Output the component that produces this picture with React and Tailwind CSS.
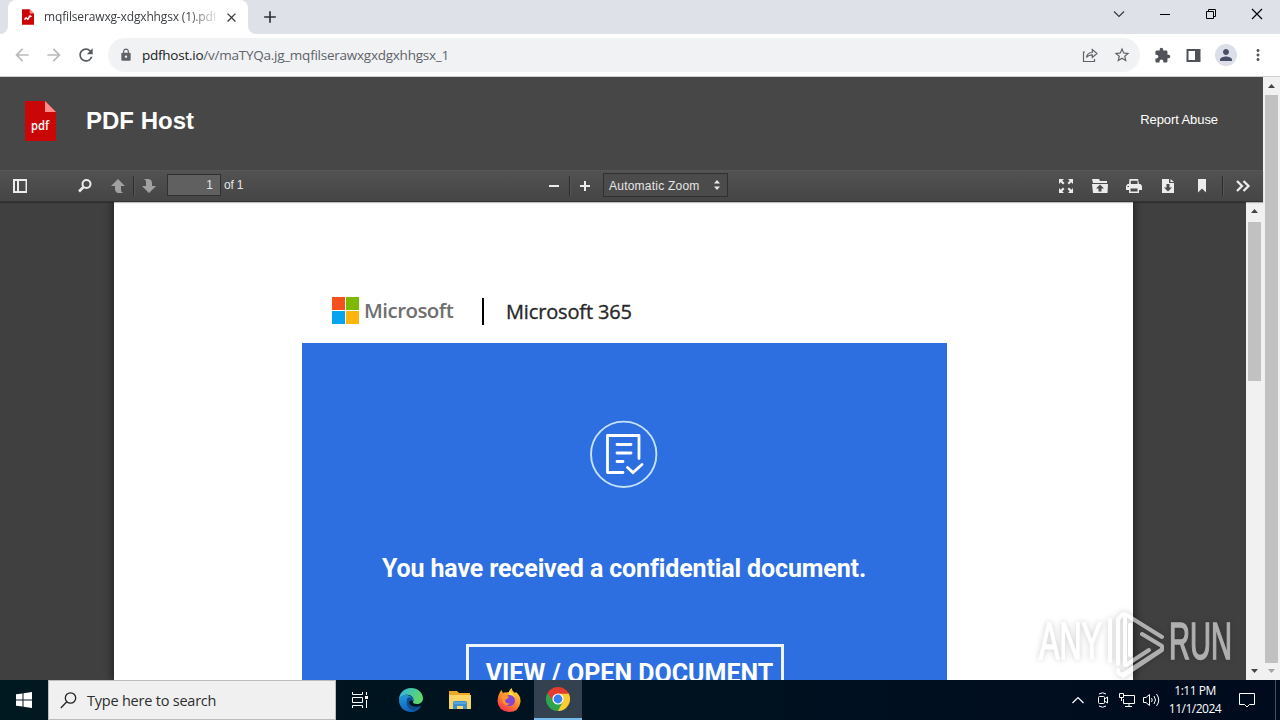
import React from 'react';
import {
    MdArrowBack,
    MdArrowForward,
    MdRefresh,
    MdLock,
    MdStarBorder,
    MdExtension,
    MdPerson,
    MdMoreVert,
    MdAdd,
    MdClose,
} from 'react-icons/md';

const UI = "font-['Open_Sans','Noto_Sans',sans-serif]";
const ARIAL = "font-['Liberation_Sans',Arial,sans-serif]";

function PdfFileIcon({ className, label }) {
    return (
        <svg className={className} viewBox="0 0 31 40">
            <path d="M0 0H20L31 11V40H0Z" fill="#cb0606" />
            <path d="M20 0L31 11H20Z" fill="#ff8c8c" />
            {label ? (
                <text x="15" y="28.5" textAnchor="middle" textLength="18" lengthAdjust="spacingAndGlyphs" fill="#fff" fontSize="12" fontWeight="600" fontFamily="Open Sans, sans-serif">pdf</text>
            ) : (
                <path d="M7 27q3-7 6-3t5-3 6-1" stroke="#fff" strokeWidth="4" fill="none" />
            )}
        </svg>
    );
}

function TabStrip() {
    return (
        <div className="h-[34px] bg-[#dee1e8] flex items-start pl-2">
            <div className="relative w-60 h-[34px] bg-white rounded-t-lg flex items-center pl-[14px]">
                <svg className="absolute -left-2 bottom-0 w-2 h-2" viewBox="0 0 8 8"><path d="M8 0V8H0A8 8 0 0 0 8 0Z" fill="#fff" /></svg>
                <svg className="absolute -right-2 bottom-0 w-2 h-2" viewBox="0 0 8 8"><path d="M0 0V8H8A8 8 0 0 1 0 0Z" fill="#fff" /></svg>
                <PdfFileIcon className="w-[12px] h-[16px]" />
                <div className={`${UI} ml-[10px] w-[171px] overflow-hidden whitespace-nowrap text-[12px] tracking-[-0.15px] leading-4 text-[#3c4043] [mask-image:linear-gradient(to_right,#000_145px,transparent_176px)]`}>
                    mqfilserawxg-xdgxhhgsx (1).pdf
                </div>
                <MdClose className="ml-[9px] w-[15px] h-[15px] text-[#3c4043]" />
            </div>
            <MdAdd className="ml-[12px] mt-[7px] w-5 h-5 text-[#2e3236]" />
            <div className="ml-auto flex items-center h-7 pr-[17px] text-black">
                <svg className="w-3 h-3 mr-[34px]" viewBox="0 0 12 12" fill="none" stroke="#333"><path d="M1 3.5L6 8.5L11 3.5" strokeWidth="1.1" /></svg>
                <svg className="w-3 h-3 mr-[34px]" viewBox="0 0 12 12"><path d="M1 6h10v1H1z" /></svg>
                <svg className="w-3 h-3 mr-[34px]" viewBox="0 0 12 12" fill="none" stroke="#000"><path d="M1.5 3.5h7v7h-7zM3.5 3.5v-2h7v7h-2" /></svg>
                <svg className="w-3 h-3" viewBox="0 0 12 12" fill="none" stroke="#000"><path d="M1 1L11 11M11 1L1 11" strokeWidth="1.2" /></svg>
            </div>
        </div>
    );
}

function AddressBar() {
    return (
        <div className="h-[43px] bg-white border-b border-[#cfcfcf] flex items-center pl-3 pr-3">
            <MdArrowBack className="w-5 h-5 text-[#b8babd]" />
            <MdArrowForward className="w-5 h-5 ml-3 text-[#b8babd]" />
            <MdRefresh className="w-5 h-5 ml-3 text-[#55595e]" />
            <div className="ml-[12px] w-[1032px] h-[34px] rounded-full bg-[#f0f2f4] flex items-center pl-[11px] pr-[9px]">
                <MdLock className="w-[14px] h-[14px] text-[#5f6368]" />
                <div className={`${UI} ml-[9px] text-[13.5px] tracking-[-0.25px] leading-5 whitespace-nowrap text-[#5f6368]`}>
                    <span className="text-[#202124]">pdfhost.io</span>/v/maTYQa.jg_mqfilserawxgxdgxhhgsx_1
                </div>
                <svg className="ml-auto w-4 h-4" viewBox="0 0 16 16" fill="none" stroke="#5f6368" strokeWidth="1.2">
                    <path d="M3 5H1.500V14.500H12.500V12M4.500 10.500C5 7 7.500 5.500 10.300 5.500V2.500L15 6.500L10.300 10.500V7.800C8 7.800 6 8.500 4.500 10.500Z" />
                </svg>
                <MdStarBorder className="ml-[15px] w-[18px] h-[18px] text-[#5f6368]" />
            </div>
            <MdExtension className="ml-[14px] w-[17px] h-[17px] text-[#4f5358]" />
            <svg className="ml-[15px] w-[15px] h-[15px]" viewBox="0 0 15 15"><path d="M.5 1H14.500V14H.5ZM2.500 3V12H9V3Z" fillRule="evenodd" fill="#4f5358" /></svg>
            <div className="ml-[14px] w-[22px] h-[22px] rounded-full bg-[#dcdfe8] flex items-center justify-center">
                <MdPerson className="w-[18px] h-[18px] text-[#4a4f68]" />
            </div>
            <MdMoreVert className="ml-[12px] w-[18px] h-[18px] shrink-0 text-[#55595e]" />
        </div>
    );
}

function SiteHeader() {
    return (
        <header className={`${ARIAL} h-[93px] bg-[#474747] flex items-center pl-[25px] pr-[45px] text-white`}>
            <PdfFileIcon className="w-[31px] h-10 mt-[-5px]" label />
            <h1 className="ml-[30px] mt-[-5px] text-[24px] leading-7 font-bold whitespace-nowrap">PDF Host</h1>
            <a className="ml-auto mt-[-8px] text-[13px] leading-4 tracking-[-0.08px] whitespace-nowrap">Report Abuse</a>
        </header>
    );
}

const Divider = ({ className }) => <i className={`w-[2px] h-5 bg-[#2d2d2d] border-r border-[#565656] ${className}`} />;

function ToolIcon({ className, children, color = '#ececec' }) {
    return <svg className={`w-4 h-4 shrink-0 ${className}`} viewBox="0 0 16 16" fill={color}>{children}</svg>;
}

function PdfToolbar() {
    return (
        <div className={`${ARIAL} relative z-10 h-8 bg-gradient-to-b from-[#525252] to-[#454545] border-t border-[#565656] border-b border-b-[#333] shadow-[0_1px_1px_rgba(0,0,0,.25)] flex items-center text-[12px] text-[#e6e6e6]`}>
            <ToolIcon className="ml-3"><path d="M1 1H15V15H1ZM3 3V13H5V3ZM7 3V13H13.500V3Z" fillRule="evenodd" /></ToolIcon>
            <ToolIcon className="ml-[49px]">
                <circle cx="9.500" cy="6" r="4" fill="none" stroke="#ececec" strokeWidth="2" />
                <path d="M6.500 9L2 13.500" stroke="#ececec" strokeWidth="2.600" />
            </ToolIcon>
            <ToolIcon className="ml-[17px]" color="#a1a1a1"><path d="M8 1L15 8H11V12Q11 14 13 15H8Q5 14 5 11V8H1Z" /></ToolIcon>
            <Divider className="ml-[7px]" />
            <ToolIcon className="ml-[6px]" color="#a1a1a1"><path d="M8 15L1 8H5V4Q5 2 3 1H8Q11 2 11 5V8H15Z" /></ToolIcon>
            <div className="ml-[10px] w-[54px] h-[22px] mt-[-2px] border border-[#303030] bg-[#606060] text-right pr-[7px] leading-5">1</div>
            <span className="ml-[3px] mt-[-3px] w-[20px] tracking-[-0.2px] whitespace-nowrap">of 1</span>
            <ToolIcon className="ml-[302px]"><path d="M3 7H13V9H3Z" /></ToolIcon>
            <Divider className="ml-[7px]" />
            <ToolIcon className="ml-[6px]"><path d="M7 3H9V7H13V9H9V13H7V9H3V7H7Z" /></ToolIcon>
            <div className="ml-[10px] mt-[-2px] w-[125px] h-6 border border-[#303030] bg-[#4b4b4b] flex items-center pl-[5px] pr-[2px] tracking-[0.23px] whitespace-nowrap">
                <span className="mt-[2px]">Automatic Zoom</span>
                <ToolIcon className="ml-auto"><path d="M8 3L11 6.500H5ZM8 13L5 9.500H11Z" /></ToolIcon>
            </div>
            <ToolIcon className="ml-[330px]">
                <path d="M1 1H6L4.300 2.700 6.500 5 5 6.500 2.700 4.300 1 6ZM15 1V6L13.300 4.300 11 6.500 9.500 5 11.700 2.700 10 1ZM1 15V10L2.700 11.700 5 9.500 6.500 11 4.300 13.300 6 15ZM15 15H10L11.700 13.300 9.500 11 11 9.500 13.300 11.700 15 10Z" />
            </ToolIcon>
            <ToolIcon className="ml-[18px]">
                <path d="M0 1H7L8 3H15V5H1ZM0 6H16L15.500 15H1ZM8 6.500L4 10.500H6.500V13.500H9.500V10.500H12Z" fillRule="evenodd" />
            </ToolIcon>
            <ToolIcon className="ml-[18px]">
                <path d="M3.500 1H12L13 6H11.500V2.800H4.800V6H3ZM1.500 6H14.500L16 8V12H13V15H3V12H0V8ZM4.500 10.500V13.500H11.500V10.500ZM1.500 8V9H3V8Z" fillRule="evenodd" />
            </ToolIcon>
            <ToolIcon className="ml-[18px]">
                <path d="M2 1H9V5H14V15H2ZM10.500 1L14 4H10.500ZM6.500 6V9.500H4L8 13.500L12 9.500H9.500V6Z" fillRule="evenodd" />
            </ToolIcon>
            <ToolIcon className="ml-[18px]"><path d="M4 1H12V14.500L8 10.500L4 14.500Z" /></ToolIcon>
            <Divider className="ml-[12px]" />
            <ToolIcon className="ml-[11px]">
                <path d="M2 3L7 8L2 13M8.500 3L13.500 8L8.500 13" fill="none" stroke="#ececec" strokeWidth="2.300" />
            </ToolIcon>
        </div>
    );
}

function MicrosoftHeader() {
    return (
        <div className="h-[141px] pt-[93px] pl-[218px] flex items-start">
            <div className="mt-[2px] grid grid-cols-2 gap-[1px] w-[27px] h-[27px] shrink-0">
                <i className="bg-[#f4511f]" />
                <i className="bg-[#7db901]" />
                <i className="bg-[#05a4f0]" />
                <i className="bg-[#fcb60b]" />
            </div>
            <span className={`${UI} ml-[5px] w-[90px] text-[20.5px] leading-[30px] font-semibold tracking-[-0.55px] text-[#6f6f6f] whitespace-nowrap`}>Microsoft</span>
            <i className="ml-[28px] mt-[3px] w-[2px] h-[27px] bg-black" />
            <span className={`${UI} ml-[22px] mt-[2px] text-[20px] leading-[30px] tracking-[-0.15px] text-[#272727] whitespace-nowrap [-webkit-text-stroke:0.35px_#272727]`}>Microsoft 365</span>
        </div>
    );
}

function DocumentPage() {
    return (
        <div className="w-[1019px] h-[478px] bg-white overflow-hidden shadow-[0_0_8px_2px_rgba(0,0,0,.45)]">
            <MicrosoftHeader />
            <div className="ml-[188px] w-[645px] h-[400px] bg-[#2d6fe1] flex flex-col items-center font-[Roboto,sans-serif] text-white font-bold">
                <svg className="mt-[76px] -ml-px w-[70px] h-[70px]" viewBox="0 0 70 70" fill="none" stroke="#fff">
                    <circle cx="34.700" cy="35.300" r="32.700" stroke="#c5e2ff" strokeWidth="1.900" />
                    <path d="M34 53.500H18.500V16.500H50V39.500" strokeWidth="2.800" strokeLinejoin="round" strokeLinecap="round" />
                    <path d="M28 25.500H42M28 34H42M28 42.500H34" strokeWidth="2.800" strokeLinecap="round" />
                    <path d="M38.500 48.500L44 53.500L53 45.500" strokeWidth="2.800" strokeLinecap="round" />
                </svg>
                <p className="mt-[64px] -ml-px text-[25px] leading-[32px] tracking-[-0.13px] whitespace-nowrap">You have received a confidential document.</p>
                <div className="mt-[59px] w-[318px] h-[60px] border-[3px] border-[#eef4ff] text-center pt-[11px] pl-[10px] text-[25px] leading-[32px] whitespace-nowrap">
                    VIEW / OPEN DOCUMENT
                </div>
            </div>
        </div>
    );
}

function Arrow({ down, color = '#444' }) {
    return (
        <svg className="w-[17px] h-[17px] shrink-0" viewBox="0 0 17 17" fill={color}>
            <path d={down ? 'M5 6H12L8.500 10Z' : 'M5 11H12L8.500 7Z'} />
        </svg>
    );
}

function Scrollbar({ children, downColor }) {
    return (
        <div className="w-[17px] h-full bg-[#f1f1f1] flex flex-col shrink-0">
            <Arrow />
            <div className="flex-1 px-[2px]">{children}</div>
            <Arrow down color={downColor} />
        </div>
    );
}

function Watermark() {
    return (
        <svg className="absolute left-[1030px] top-[600px] w-[220px] h-20 overflow-visible drop-shadow-[0_0_3px_rgba(0,0,0,.35)]" viewBox="0 0 220 80" opacity=".58">
            <g fill="#fff" stroke="#fff" strokeWidth="1.6" fontFamily="Liberation Sans, Arial, sans-serif" fontSize="51">
                <text x="9" y="59" textLength="63" lengthAdjust="spacingAndGlyphs">ANY</text>
                <text x="139" y="59" textLength="63" lengthAdjust="spacingAndGlyphs">RUN</text>
            </g>
            <g fill="none" stroke="#fff" strokeWidth="4" strokeLinejoin="round" strokeLinecap="round">
                <path d="M88 64V19L93 14M100 55V25M80 61V20" />
                <path d="M95 65V14L132 37M95 44V14M93 76L132 50V46L112 34" />
                <path d="M88 70Q88 76 94 74L131 50M96 65L119 50" />
            </g>
        </svg>
    );
}

function EdgeLogo() {
    return (
        <svg className="w-6 h-6" viewBox="0 0 24 24">
            <defs>
                <linearGradient id="edgeTop" x1="0" y1="0" x2="1" y2=".3">
                    <stop stopColor="#2fb2e8" />
                    <stop offset="1" stopColor="#5fd968" />
                </linearGradient>
                <linearGradient id="edgeSide" x1="0" y1="0" x2=".4" y2="1">
                    <stop stopColor="#249be0" />
                    <stop offset="1" stopColor="#1160b7" />
                </linearGradient>
            </defs>
            <path d="M0 12C0 5 5 0 12 0S24 5 24 10.500C24 14 21 16 18 16S14 15 14 14C15 13 15 8 10 7 5 6 1 9 0 12Z" fill="url(#edgeTop)" />
            <path d="M0 12C1 8 6 6 10 7.500 13 8.500 15 11 14.500 13 11 11 8 14 10 18 12 21 17 21 22 18 20 22 16 24 12 24 5 24 0 19 0 12Z" fill="url(#edgeSide)" />
            <path d="M8.500 10Q6 17 11 21T22 18Q15 20 11.500 17T14 11Q11 8 8.500 10Z" fill="#114a8b" />
        </svg>
    );
}

function FolderLogo() {
    return (
        <svg className="w-[22px] h-[19px]" viewBox="0 0 22 19">
            <path d="M0 0H8L10 2H21V8H0Z" fill="#eda825" />
            <path d="M0 4H22V18H0Z" fill="#fbd568" />
            <path d="M4 18V12Q4 10 6 10H16Q18 10 18 12V18H14V15H8V18Z" fill="#3f91cd" />
            <path d="M5 12H17" stroke="#76b9e6" strokeWidth="1" />
        </svg>
    );
}

function FirefoxLogo() {
    return (
        <svg className="w-6 h-6" viewBox="0 0 24 24">
            <defs>
                <linearGradient id="fox" x1=".8" y1="0" x2=".2" y2="1">
                    <stop stopColor="#ffe23f" />
                    <stop offset=".45" stopColor="#ff9128" />
                    <stop offset="1" stopColor="#f92b55" />
                </linearGradient>
            </defs>
            <path d="M3 4L4.500 2 6 5Q8 4 9 4.500L12 4Q12 2 14.500 0 15 3 18 5L19 4Q24 8 23.500 14 22 24 12 24 1 23 .5 13 .5 8 3 4Z" fill="url(#fox)" />
            <circle cx="12.500" cy="12.500" r="5.500" fill="#8047d7" />
            <path d="M4 8Q9 6 12 9L10 11Q8 11 8 13 9 16 13 15.500 9 19 6 15Z" fill="#ff9428" />
            <path d="M12 3Q17 5 18 10 15 6 12 7Z" fill="#ffe14a" />
        </svg>
    );
}

function ChromeLogo() {
    return (
        <svg className="w-6 h-6" viewBox="0 0 24 24">
            <path d="M12 12L1.600 6A12 12 0 0 1 22.400 6Z" fill="#e33b2e" />
            <path d="M12 12L22.400 6A12 12 0 0 1 12 24Z" fill="#fccb2d" />
            <path d="M12 12V24A12 12 0 0 1 1.600 6Z" fill="#2da44e" />
            <path d="M12 6.400H22.600L16.850 14.800Z" fill="#fccb2d" />
            <path d="M1.600 6L7.150 14.800L12 6.400H22.600L22.400 6Z" fill="#e33b2e" />
            <path d="M7.150 14.800L12 24L16.850 14.800Z" fill="#2da44e" />
            <circle cx="12" cy="12" r="5.600" fill="#fff" />
            <circle cx="12" cy="12" r="4.400" fill="#3880ee" />
        </svg>
    );
}

function Taskbar() {
    return (
        <div className={`${UI} h-10 bg-gradient-to-r from-[#001820] to-[#000b1e] flex items-center text-white`}>
            <div className="w-12 flex justify-center">
                <svg className="w-4 h-4" viewBox="0 0 16 16" fill="#fff"><path d="M0 2.300L6.500 1.400V7.500H0ZM7.500 1.200L16 0V7.500H7.500ZM0 8.500H6.500V14.600L0 13.700ZM7.500 8.500H16V16L7.500 14.800Z" /></svg>
            </div>
            <div className="w-72 h-10 bg-[#f0f0f0] border border-[#bcbcbc] flex items-center pl-[11px]">
                <svg className="w-[17px] h-[17px]" viewBox="0 0 17 17" fill="none" stroke="#222" strokeWidth="1.300"><circle cx="10.500" cy="6" r="5.200" /><path d="M6.800 9.800L.8 16" /></svg>
                <span className="ml-[10px] mt-[2px] text-[14.5px] tracking-[-0.22px] text-[#2d2d2d] whitespace-nowrap">Type here to search</span>
            </div>
            <div className="w-12 flex justify-center">
                <svg className="w-4 h-4" viewBox="0 0 16 16" fill="none" stroke="#fff">
                    <path d="M.5 0V2.500H10.500V0M.5 16V13.500H10.500V16M.5 5.500H10.500V10.500H.5ZM14.500 0V3M14.500 8V16" />
                    <path d="M13 4H16V7H13Z" fill="#fff" stroke="none" />
                </svg>
            </div>
            <div className="ml-[15px]"><EdgeLogo /></div>
            <div className="ml-[26px]"><FolderLogo /></div>
            <div className="ml-[26px]"><FirefoxLogo /></div>
            <div className="ml-[13px] w-12 h-10 bg-[#344250] border-b-2 border-[#76b9ed] flex items-center justify-center"><ChromeLogo /></div>
            <div className="ml-auto flex items-center">
                <svg className="w-3 h-3" viewBox="0 0 12 12" fill="none" stroke="#fff" strokeWidth="1.200"><path d="M.5 9L6 3.500L11.500 9" /></svg>
                <svg className="ml-3 w-[14px] h-4" viewBox="0 0 14 16" fill="none" stroke="#fff"><rect x="2.500" y="4.500" width="6" height="7" rx="1" /><path d="M8.500 7L11.500 5V11L8.500 9M3 2Q6.500-.5 10 2M3 14Q6.500 16.500 10 14" /></svg>
                <svg className="ml-[9px] w-4 h-4" viewBox="0 0 16 16" fill="none" stroke="#fff"><path d="M5 3.500H15.500V11.500H4.500V7M10 11.500V14.500M6 14.500H13M.5 1.500H4.500V5.500H.5ZM2.500 5.500V9" /></svg>
                <svg className="ml-2 w-[17px] h-4" viewBox="0 0 17 16" fill="none" stroke="#fff"><path d="M.5 5.500H3L6.500 2.500V13.500L3 10.500H.5ZM8.500 6Q10 8 8.500 10M11 4Q14 8 11 12M13.500 2Q18 8 13.500 14" /></svg>
                <div className="ml-[8px] w-[54px] text-center text-[12px] leading-[18px] tracking-[-0.5px] whitespace-nowrap">
                    <div>1:11 PM</div>
                    <div>11/1/2024</div>
                </div>
                <svg className="ml-[17px] w-4 h-4" viewBox="0 0 16 16" fill="none" stroke="#fff"><path d="M.5 1.500H15.500V12.500H10.500L8 15L5.500 12.500H.5Z" /></svg>
                <i className="ml-[20px] mr-1 w-px h-10 bg-[#44505e]" />
            </div>
        </div>
    );
}

export default function App() {
    return (
        <div className="relative w-[1280px] h-[720px] overflow-hidden flex flex-col">
            <TabStrip />
            <AddressBar />
            <div className="flex h-[603px]">
                <main className="w-[1263px] flex flex-col">
                    <SiteHeader />
                    <PdfToolbar />
                    <div className="flex h-[478px] bg-[#404040]">
                        <div className="flex-1 pl-[114px] overflow-hidden"><DocumentPage /></div>
                        <Scrollbar downColor="#444"><div className="mt-[3px] h-[159px] bg-[#c1c1c1]" /></Scrollbar>
                    </div>
                </main>
                <Scrollbar downColor="#a3a3a3"><div className="mt-[1px] h-[568px] bg-[#c1c1c1]" /></Scrollbar>
            </div>
            <Taskbar />
            <Watermark />
        </div>
    );
}
